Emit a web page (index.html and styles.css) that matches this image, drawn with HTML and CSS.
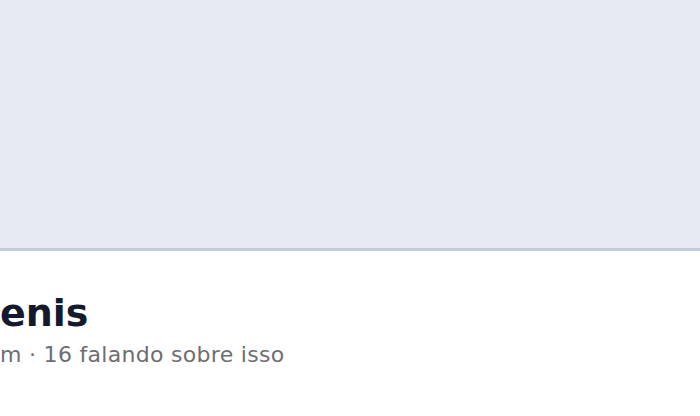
FILE: index.html
```html
<!DOCTYPE html>
<html lang="pt">
<head>
  <meta charset="UTF-8" />
  <title>Página</title>
  <link rel="stylesheet" href="styles.css">
</head>
<body>
  <div class="cover"></div>
  <div class="page-info">
    <h1 class="page-name">enis</h1>
    <div class="page-meta">m · 16 falando sobre isso</div>
  </div>
</body>
</html>
```

FILE: styles.css
```css
* { box-sizing: border-box; }

body {
  margin: 0;
  background: #fff;
  font-family: "DejaVu Sans", "Lucida Grande", sans-serif;
  overflow: hidden;
}

.cover {
  height: 251px;
  background: #e6eaf3;
  border-bottom: 3px solid #c3cbdb;
}

.page-info {
  padding-top: 39px;
}

.page-name {
  margin: 0;
  font-size: 38px;
  font-weight: bold;
  color: #141a2e;
  line-height: 46px;
}

.page-meta {
  margin-top: 6px;
  font-size: 22px;
  letter-spacing: 0.3px;
  color: #6c6e73;
}
```
